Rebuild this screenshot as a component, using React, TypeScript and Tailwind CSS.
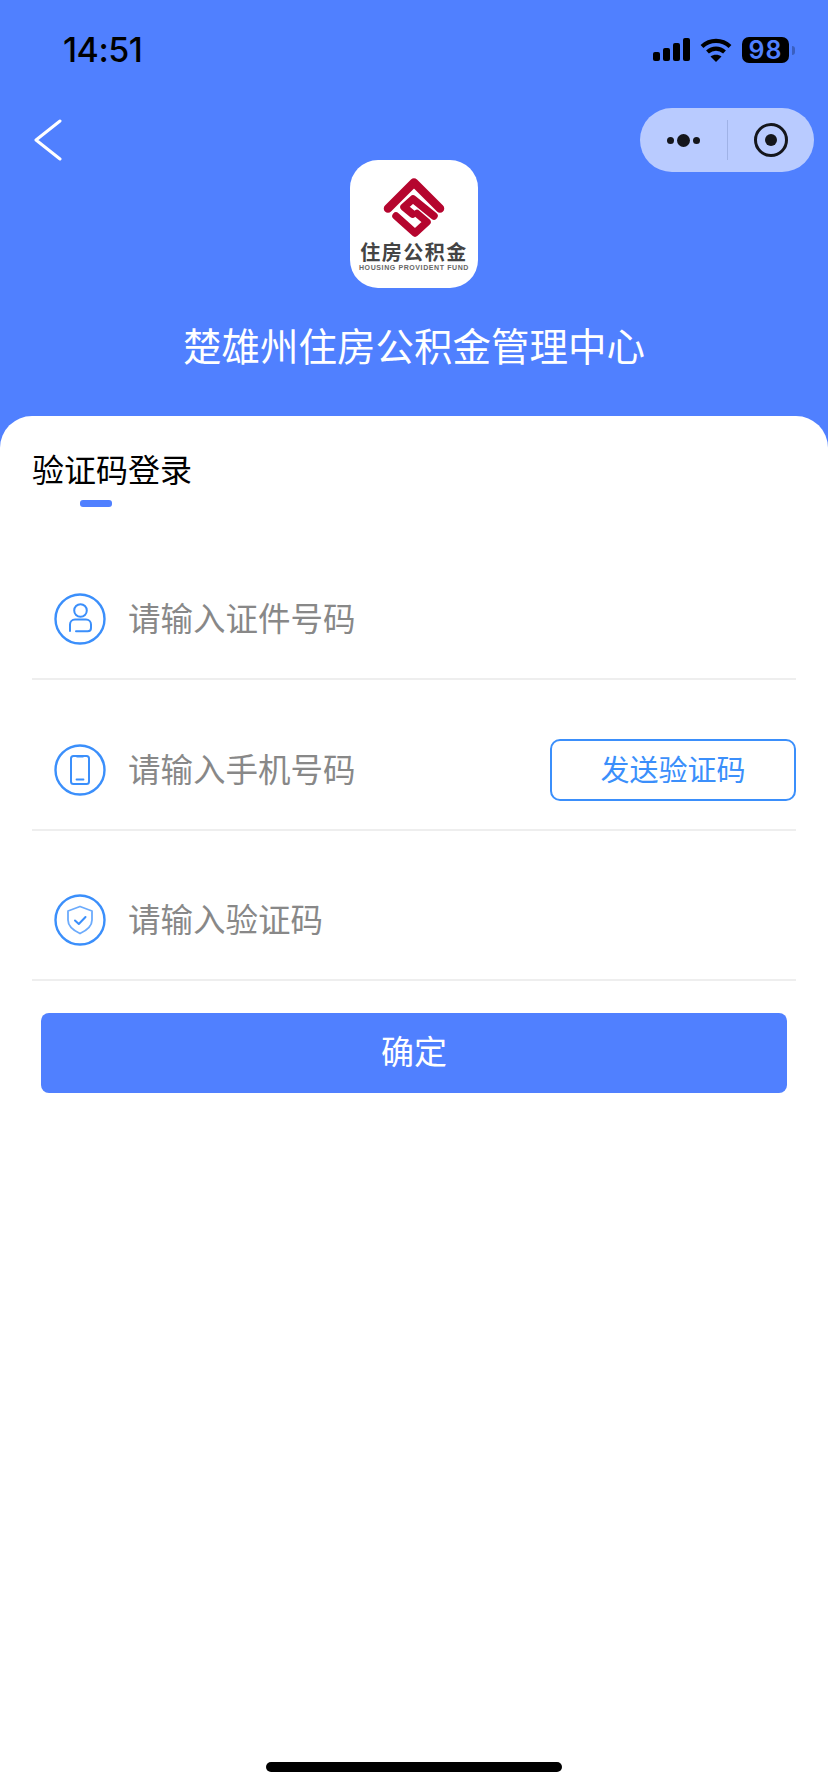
const BLUE = "#3b8ffb";

function CircleIcon({ children }: { children: React.ReactNode }) {
  return (
    <svg width="52" height="52" viewBox="0 0 52 52" fill="none" stroke={BLUE} strokeLinecap="round" strokeLinejoin="round">
      <circle cx="26" cy="26" r="24.5" strokeWidth="2.4" />
      {children}
    </svg>
  );
}

function UserIcon() {
  return (
    <CircleIcon>
      <circle cx="26.5" cy="17.5" r="6.3" strokeWidth="2" />
      <path d="M16 38v-6.500c0-3 2.200-5 5-5h11c2.800 0 5 2 5 5V35c0 2-1.200 3.300-3.300 3.300H22" strokeWidth="2" />
    </CircleIcon>
  );
}

function PhoneIcon() {
  return (
    <CircleIcon>
      <rect x="17" y="12" width="18" height="28" rx="2.500" strokeWidth="2" />
      <path d="M23 12.500h6M22.500 35.500h7" strokeWidth="1.800" />
    </CircleIcon>
  );
}

function ShieldIcon() {
  return (
    <CircleIcon>
      <path d="M26 12.500l12 4.500v9c0 6.500-5.500 10.500-12 13.500-6.500-3-12-7-12-13.500v-9z" strokeWidth="1.800" opacity="0.75" />
      <path d="M21 26.500l3.800 3.500 6.700-7" strokeWidth="2" />
    </CircleIcon>
  );
}

function StatusIcons() {
  return (
    <div className="flex items-center">
      <svg width="38" height="24" viewBox="0 0 38 24" fill="#000">
        <rect x="0" y="14" width="7" height="9" rx="2" />
        <rect x="10" y="10" width="7" height="13" rx="2" />
        <rect x="20" y="5" width="7" height="18" rx="2" />
        <rect x="30" y="0" width="7" height="23" rx="2" />
      </svg>
      <svg className="ml-[9px]" width="32" height="24" viewBox="0 0 32 24" fill="none" stroke="#000" strokeWidth="4.200">
        <path d="M2 8.500c8-7.500 20-7.500 28 0" />
        <path d="M7.500 14c5-4.500 12-4.500 17 0" />
        <path d="M16 24l-5.500-5.500c3-2.500 8-2.500 11 0z" fill="#000" stroke="none" />
      </svg>
      <div className="ml-[10px] flex h-[26px] w-[47px] items-center justify-center rounded-[7px] bg-black text-[25px] font-semibold leading-none tracking-[1px] text-[#5080ff]">
        98
      </div>
      <div className="ml-[3px] h-[9px] w-[3px] rounded-r-full bg-[#3a5fc0]" />
    </div>
  );
}

function Capsule() {
  return (
    <div className="flex h-[64px] w-[174px] items-center rounded-full bg-[#b9cbff]">
      <div className="flex h-full w-[87px] items-center justify-center gap-[3px]">
        <span className="h-[7px] w-[7px] rounded-full bg-[#14161c]" />
        <span className="h-[13px] w-[13px] rounded-full bg-[#14161c]" />
        <span className="h-[7px] w-[7px] rounded-full bg-[#14161c]" />
      </div>
      <div className="h-[40px] w-px bg-[#9fb2e6]" />
      <div className="flex h-full flex-1 items-center justify-center">
        <div className="flex h-[34px] w-[34px] items-center justify-center rounded-full border-[3px] border-[#14161c]">
          <span className="h-[12px] w-[12px] rounded-full bg-[#14161c]" />
        </div>
      </div>
    </div>
  );
}

function Logo() {
  return (
    <div className="flex h-[128px] w-[128px] flex-col items-center rounded-[28px] bg-white pt-[10px]">
      <svg className="shrink-0" width="80" height="70" viewBox="0 0 80 70" fill="none" stroke="#b5052e" strokeLinecap="round" strokeLinejoin="round">
        <path d="M14 38.500L40 12.500l26 26" strokeWidth="8.500" />
        <path d="M60 46L39 29 30 37l8.500 7" strokeWidth="7.500" />
        <path d="M22 46l19 17 12-11-10-8.500" strokeWidth="7.500" />
      </svg>
      <div className="mt-[2px] whitespace-nowrap text-[20px] font-bold leading-[20px] tracking-[1.500px] text-[#444] [font-family:'Noto_Sans_CJK_SC',sans-serif]">
        住房公积金
      </div>
      <div className="mt-[2px] whitespace-nowrap text-[7px] font-bold leading-[8px] tracking-[0.600px] text-[#666] [font-family:'Liberation_Sans',sans-serif]">
        HOUSING PROVIDENT FUND
      </div>
    </div>
  );
}

function Field({ icon, label, action }: { icon: React.ReactNode; label: string; action?: React.ReactNode }) {
  return (
    <div className="flex h-[151px] items-end border-b-2 border-[#eeeeee] last:h-[150px]">
      <div className="flex h-[118px] w-full items-center">
        <div className="ml-[22px] flex w-[74px] shrink-0">{icon}</div>
        <span className="flex-1 pt-[2px] text-[32.500px] leading-none text-[#888888]">{label}</span>
        {action}
      </div>
    </div>
  );
}

export default function App() {
  return (
    <div className="flex min-h-[1792px] w-[828px] flex-col bg-[#5080ff] [font-family:'Inter','Noto_Sans_CJK_SC',sans-serif]">
      <div className="flex h-[108px] items-center justify-between pl-[63px] pr-[33px] pb-[8px]">
        <span className="text-[34px] font-medium leading-none tracking-[-0.5px] text-black">14:51</span>
        <StatusIcons />
      </div>

      <div className="relative flex h-[308px] flex-col items-center pt-[52px]">
        <svg className="absolute left-[33px] top-[11px]" width="30" height="42" viewBox="0 0 30 42" fill="none" stroke="#fff" strokeWidth="3" strokeLinecap="round" strokeLinejoin="round">
          <path d="M27 2L3 21l24 19" />
        </svg>
        <div className="absolute right-[14px] top-0">
          <Capsule />
        </div>
        <Logo />
        <h1 className="mt-[36px] text-[38.500px] font-normal leading-[46px] text-white">楚雄州住房公积金管理中心</h1>
      </div>

      <div className="flex flex-1 flex-col rounded-t-[32px] bg-white px-[32px]">
        <div className="pt-[34px] text-[32px] leading-[42px] text-black">验证码登录</div>
        <div className="ml-[48px] mt-[8px] h-[7px] w-[32px] rounded-[3px] bg-[#5080ff]" />
        <div className="mt-[22px] flex flex-col">
          <Field icon={<UserIcon />} label="请输入证件号码" />
          <Field
            icon={<PhoneIcon />}
            label="请输入手机号码"
            action={
              <button className="flex h-[62px] w-[246px] items-center justify-center rounded-[10px] border-2 border-[#3b8ffb] text-[29px] leading-none text-[#3b8ffb]">
                发送验证码
              </button>
            }
          />
          <Field icon={<ShieldIcon />} label="请输入验证码" />
        </div>
        <button className="mx-[9px] mt-[32px] h-[80px] rounded-[8px] bg-[#5080ff] text-[33px] text-white">确定</button>
        <div className="mt-auto flex justify-center pb-[20px]">
          <div className="h-[10px] w-[296px] rounded-full bg-black" />
        </div>
      </div>
    </div>
  );
}
